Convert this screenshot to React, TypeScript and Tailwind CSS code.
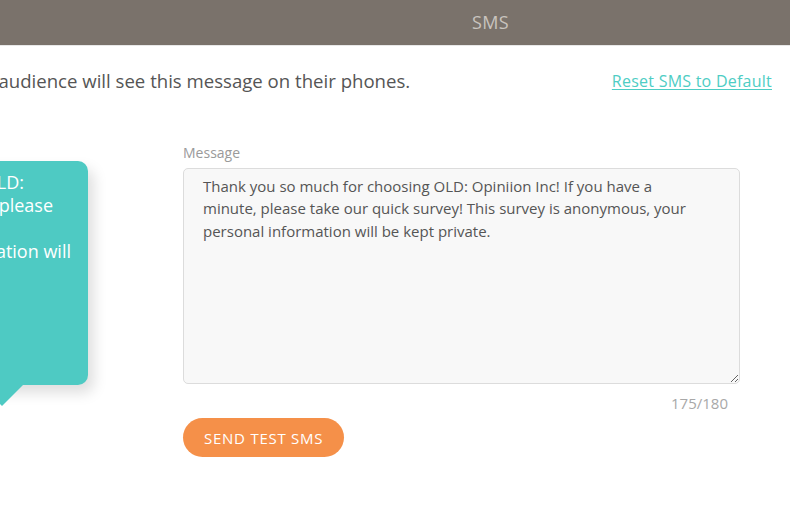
import React from 'react';

const SmsSettings: React.FC = () => {
  return (
    <div className="w-[790px] h-[506px] overflow-hidden bg-white font-['Open_Sans',sans-serif] text-[#4a4a4a]">
      {/* Header */}
      <header className="h-[46px] bg-[#7a726b] border-b border-[#e8e8e8] flex items-center">
        <span className="ml-[472px] text-[18px] tracking-[0.02em] text-[#c9c4bf]">SMS</span>
      </header>

      {/* Intro row */}
      <div className="flex items-center justify-between pr-[18px] mt-[21px]">
        <p className="-ml-[47px] text-[18.6px] text-[#555] whitespace-nowrap">
          Your audience will see this message on their phones.
        </p>
        <a href="#" className="text-[16px] tracking-[0.015em] text-[#4ecdc4] underline underline-offset-2">
          Reset SMS to Default
        </a>
      </div>

      {/* Body */}
      <div className="flex mt-[48px]">
        {/* Phone preview bubble */}
        <div className="relative -ml-[300px] w-[388px] h-[224px] mt-[18px] shrink-0 rounded-[10px] bg-[#4ecac3] shadow-[6px_8px_14px_rgba(0,0,0,0.13)]">
          <div className="flex flex-col items-end pt-[10px] text-[18px] leading-[23px] font-medium text-white whitespace-nowrap">
            <span className="mr-[64px]">Thank you so much for choosing OLD:</span>
            <span className="mr-[35px]">Opiniion Inc! If you have a minute, please</span>
            <span className="mr-[110px]">take our quick survey! This survey is</span>
            <span className="mr-[17px]">anonymous, your personal information will</span>
            <span className="mr-[200px]">be kept private.</span>
          </div>
          <svg className="absolute right-[64px] -bottom-[21px]" width="44" height="22" viewBox="0 0 44 22">
            <polygon points="0,0 44,0 22,22" fill="#4ecac3" />
          </svg>
        </div>

        {/* Form */}
        <div className="ml-[95px] w-[557px] flex flex-col">
          <label className="text-[14px] text-[#9a9a9a] leading-[20px]">Message</label>
          <div className="relative mt-[5px]">
            <textarea
              className="block w-full h-[216px] resize-y rounded-[5px] border border-[#dcdcdc] bg-[#f8f8f8] pl-[19px] pr-[38px] pt-[6px] pb-[6px] text-[15px] leading-[22.5px] text-[#555] outline-none"
              defaultValue="Thank you so much for choosing OLD: Opiniion Inc! If you have a minute, please take our quick survey! This survey is anonymous, your personal information will be kept private."
            />
          </div>
          <div className="flex justify-end pr-[12px] mt-[8px]">
            <span className="text-[15px] text-[#a8a8a8]">175/180</span>
          </div>
          <div className="mt-[4px]">
            <button className="h-[39px] px-[21px] rounded-full bg-[#f59049] text-white text-[15px] font-medium tracking-[0.05em]">
              SEND TEST SMS
            </button>
          </div>
        </div>
      </div>
    </div>
  );
};

export default SmsSettings;
